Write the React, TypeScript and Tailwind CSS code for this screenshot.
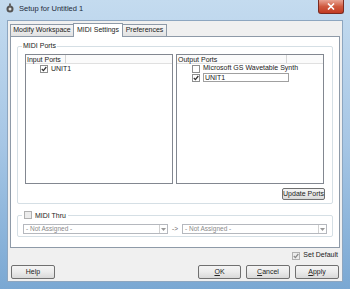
import React from "react";

const font = { fontFamily: '"Liberation Sans", Arial, sans-serif' };

function Check({ checked, grey }: { checked?: boolean; grey?: boolean }) {
  return (
    <div className={`w-[8px] h-[8px] border ${grey ? "border-[#b0b0b0] bg-[#ececec]" : "border-[#8e8f8f] bg-white"} flex items-center justify-center shrink-0`}>
      {checked && (
        <svg width="6" height="6" viewBox="0 0 6 6">
          <path d="M0.8 3 L2.4 4.6 L5.3 1" stroke={grey ? "#8a8a8a" : "#333"} strokeWidth="1.3" fill="none" />
        </svg>
      )}
    </div>
  );
}

function Btn({ children, w, h = "h-[14px]" }: { children: React.ReactNode; w: string; h?: string }) {
  return (
    <div className={`${w} ${h} whitespace-nowrap border border-[#707070] rounded-[2px] bg-gradient-to-b from-[#f4f4f4] via-[#ebebeb] to-[#d9d9d9] flex items-center justify-center text-[7px] text-[#222]`}>
      {children}
    </div>
  );
}

function Combo() {
  return (
    <div className="flex-1 h-[10px] border border-[#b5b8be] bg-white flex items-center">
      <span className="flex-1 pl-[2px] text-[6.5px] text-[#8a8a8a] leading-none whitespace-nowrap">- Not Assigned -</span>
      <div className="w-[8px] h-full border-l border-[#d0d0d0] flex items-center justify-center">
        <svg width="5" height="3" viewBox="0 0 5 3"><path d="M0 0 L5 0 L2.5 3Z" fill="#999" /></svg>
      </div>
    </div>
  );
}

export default function App() {
  return (
    <div style={font} className="w-[350px] h-[289px] bg-gradient-to-b from-[#c4dbef] via-[#a6c6e5] to-[#7aa8d3] flex flex-col overflow-hidden whitespace-nowrap">
      {/* title bar */}
      <div className="h-[20px] flex items-start shrink-0">
        <div className="flex items-center gap-[4px] pl-[5px] pt-[3px]">
          <svg width="10" height="11" viewBox="0 0 10 11">
            <circle cx="5" cy="6" r="3.5" fill="#555" />
            <circle cx="5" cy="6" r="1.5" fill="#ddd" />
            <rect x="4" y="0.5" width="2" height="3" fill="#666" />
          </svg>
          <span className="text-[7.5px] text-[#1e2a3a]">Setup for Untitled 1</span>
        </div>
        <div className="flex-1" />
        <div className="w-[26px] h-[14px] mr-[6px] rounded-b-[3px] border border-t-0 border-[#7a2a20] bg-gradient-to-b from-[#e8a393] via-[#cf5a3f] to-[#c23a22] flex items-center justify-center">
          <svg width="8" height="7" viewBox="0 0 8 7"><path d="M1 0.5 L7 6.5 M7 0.5 L1 6.5" stroke="white" strokeWidth="1.6" /></svg>
        </div>
      </div>
      {/* client */}
      <div className="flex-1 mx-[7px] mb-[7px] bg-[#f0f0f0] border border-[#8da6c0] flex flex-col text-[7px] text-[#222]">
        {/* tabs */}
        <div className="flex items-end pl-[2px] pt-[1px] h-[15px]">
          <div className="h-[12px] px-[3px] border border-[#8e9aa8] border-b-0 bg-gradient-to-b from-[#f6f6f6] to-[#e2e2e2] flex items-center justify-center w-[64px]">Modify Workspace</div>
          <div className="h-[14px] px-[3px] border border-[#8e9aa8] border-b-0 bg-white flex items-center justify-center w-[50px] -mb-[1px] z-10 -mx-[1px]">MIDI Settings</div>
          <div className="h-[12px] px-[3px] border border-[#8e9aa8] border-b-0 bg-gradient-to-b from-[#f6f6f6] to-[#e2e2e2] flex items-center justify-center w-[45px]">Preferences</div>
        </div>
        {/* panel */}
        <div className="mx-[2px] h-[212px] border border-[#8e9aa8] bg-white flex flex-col px-[6px]">
          {/* MIDI Ports group */}
          <div className="relative h-[158px] border border-[#d5dfe5] rounded-[2px] mt-[9px] flex flex-col px-[7px] pt-[7px]">
            <span className="absolute -top-[5px] left-[4px] bg-white px-[1px] leading-none">MIDI Ports</span>
            <div className="flex gap-[3px] h-[130px]">
              <div className="w-[148px] border border-[#828790] bg-white flex flex-col">
                <div className="flex h-[9px] border-b border-[#e0e0e0] bg-[#fbfbfb]">
                  <div className="w-[40px] border-r border-[#d5d5d5] leading-[9px] pl-[1px]">Input Ports</div>
                </div>
                <div className="flex items-center gap-[3px] pl-[14px] h-[10px]">
                  <Check checked /> <span>UNIT1</span>
                </div>
              </div>
              <div className="w-[148px] border border-[#828790] bg-white flex flex-col">
                <div className="flex h-[9px] border-b border-[#e0e0e0] bg-[#fbfbfb]">
                  <div className="w-[110px] border-r border-[#d5d5d5] leading-[9px] pl-[1px]">Output Ports</div>
                </div>
                <div className="flex items-center gap-[3px] pl-[15px] h-[9px]">
                  <Check /> <span>Microsoft GS Wavetable Synth</span>
                </div>
                <div className="flex items-center gap-[3px] pl-[15px] h-[9px]">
                  <Check checked />
                  <span className="w-[86px] border border-[#a0a0a0] leading-[7px] pl-[1px]">UNIT1</span>
                </div>
              </div>
            </div>
            <div className="flex justify-end mt-[4px]">
              <Btn w="w-[43px]" h="h-[12px]">Update Ports</Btn>
            </div>
          </div>
          {/* MIDI Thru group */}
          <div className="relative h-[22px] border border-[#d5dfe5] rounded-[2px] mt-[11px] flex items-start px-[5px] pt-[8px]">
            <div className="absolute -top-[5px] left-[4px] bg-white px-[2px] flex items-center gap-[3px] leading-none">
              <Check grey /> <span>MIDI Thru</span>
            </div>
            <div className="flex items-center w-full gap-[2px]">
              <Combo />
              <span className="text-[6.5px] text-[#666] w-[10px] text-center">-&gt;</span>
              <Combo />
            </div>
          </div>
        </div>
        {/* bottom */}
        <div className="flex justify-end items-center gap-[3px] pr-[4px] mt-[3px] h-[9px]">
          <Check checked grey /> <span>Set Default</span>
        </div>
        <div className="flex items-center px-[3px] mt-[5px]">
          <Btn w="w-[44px]">Help</Btn>
          <div className="flex-1" />
          <div className="flex gap-[5px]">
            <Btn w="w-[43px]"><span className="underline">O</span>K</Btn>
            <Btn w="w-[44px]"><span className="underline">C</span>ancel</Btn>
            <Btn w="w-[44px]"><span className="underline">A</span>pply</Btn>
          </div>
        </div>
      </div>
    </div>
  );
}
